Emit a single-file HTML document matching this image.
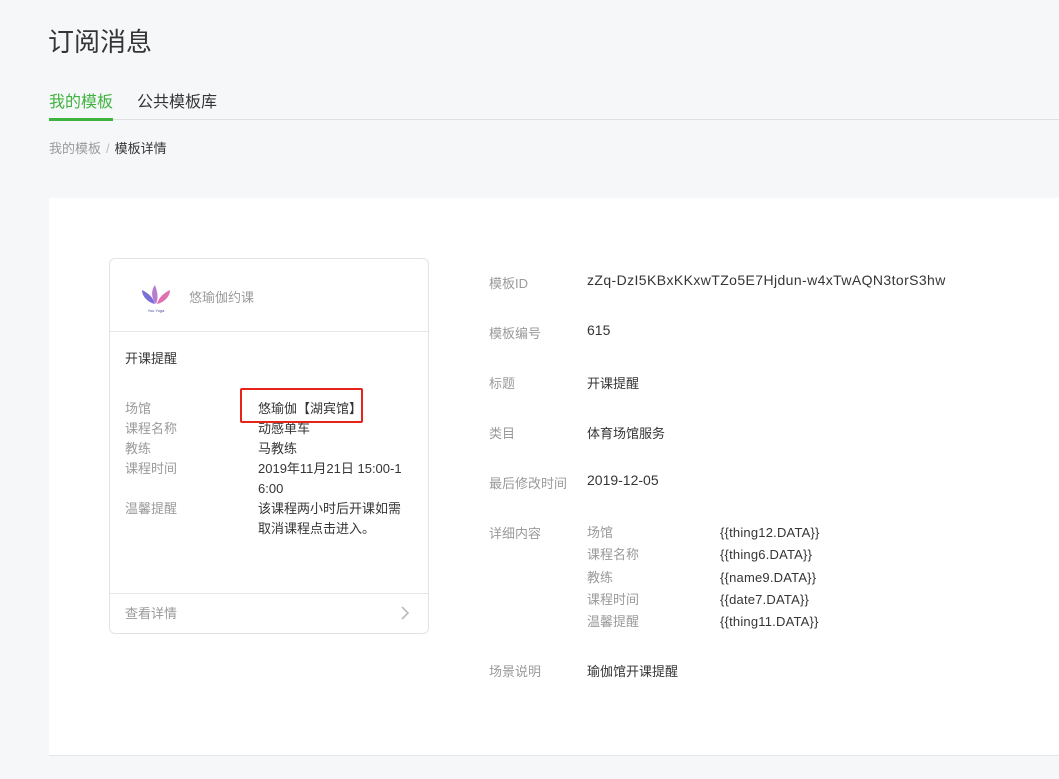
<!DOCTYPE html>
<html><head><meta charset="utf-8"><style>
*{margin:0;padding:0;box-sizing:border-box}
body{width:1059px;height:779px;background:#f6f7f9;font-family:"Liberation Sans","Noto Sans CJK SC",sans-serif;position:relative;overflow:hidden;color:#353535}
.a{position:absolute;white-space:nowrap}
.g{color:#9a9a9a}
.f14{font-size:14px}
.f13{font-size:13px}
</style></head><body>
<div class="a" style="left:48px;top:22px;font-size:26px;color:#353535">订阅消息</div>
<div class="a" style="left:49px;top:88px;font-size:16px;color:#3fb33f">我的模板</div>
<div class="a" style="left:137px;top:88px;font-size:16px;color:#353535">公共模板库</div>
<div class="a" style="left:49px;top:119px;width:1010px;height:1px;background:#e0e0e0"></div>
<div class="a" style="left:49px;top:118px;width:64px;height:3px;background:#3fb33f"></div>
<div class="a f13" style="left:49px;top:138px;color:#9a9a9a">我的模板<span style="color:#bbb;margin:0 5px">/</span><span style="color:#353535">模板详情</span></div>

<div class="a" style="left:49px;top:198px;width:1020px;height:558px;background:#fff;border-bottom:1px solid #e7e7e7"></div>

<div class="a" style="left:109px;top:258px;width:320px;height:376px;border:1px solid #e3e3e3;border-radius:6px;background:#fff"></div>
<div class="a" style="left:110px;top:331px;width:318px;height:1px;background:#e7e7e7"></div>
<div class="a" style="left:110px;top:593px;width:318px;height:1px;background:#e7e7e7"></div>
<svg class="a" style="left:139px;top:282px" width="34" height="32" viewBox="0 0 34 32">
<path d="M17 22 C12 16 12 8 16 3 C18 9 20 15 17 22Z" fill="#b87bd0"/>
<path d="M16 22 C8 20 3 14 3 8 C9 11 14 15 16 22Z" fill="#7a6fd8"/>
<path d="M18 22 C26 20 31 14 31 8 C25 11 20 15 18 22Z" fill="#e070b0"/>
<text x="17" y="30" font-size="4" text-anchor="middle" fill="#4a4aa0">You Yoga</text></svg>
<div class="a f13 g" style="left:189px;top:287px">悠瑜伽约课</div>
<div class="a f13" style="left:125px;top:348px">开课提醒</div>
<div class="a f13 g" style="left:125px;top:399px;line-height:20px">场馆<br>课程名称<br>教练<br>课程时间<br><br>温馨提醒</div>
<div class="a f13" style="left:258px;top:399px;line-height:20px">悠瑜伽【湖宾馆】<br>动感单车<br>马教练<br>2019年11月21日 15:00-1<br>6:00<br>该课程两小时后开课如需<br>取消课程点击进入。</div>
<div class="a" style="left:240px;top:388px;width:123px;height:35px;border:2px solid #e8231a;border-radius:2px"></div>
<div class="a f13 g" style="left:125px;top:603px">查看详情</div>
<svg class="a" style="left:400px;top:605px" width="10" height="16"><path d="M2 2 L8 8 L2 14" stroke="#bbb" stroke-width="1.6" fill="none"/></svg>

<div class="a f13 g" style="left:489px;top:273px">模板ID</div>
<div class="a f14" style="left:587px;top:272px;letter-spacing:0.4px">zZq-DzI5KBxKKxwTZo5E7Hjdun-w4xTwAQN3torS3hw</div>
<div class="a f13 g" style="left:489px;top:323px">模板编号</div>
<div class="a f14" style="left:587px;top:322px">615</div>
<div class="a f13 g" style="left:489px;top:373px">标题</div>
<div class="a f13" style="left:587px;top:373px">开课提醒</div>
<div class="a f13 g" style="left:489px;top:423px">类目</div>
<div class="a f13" style="left:587px;top:423px">体育场馆服务</div>
<div class="a f13 g" style="left:489px;top:473px">最后修改时间</div>
<div class="a f14" style="left:587px;top:472px">2019-12-05</div>
<div class="a f13 g" style="left:489px;top:523px">详细内容</div>
<div class="a f13 g" style="left:587px;top:522px;line-height:22.3px">场馆<br>课程名称<br>教练<br>课程时间<br>温馨提醒</div>
<div class="a f13" style="left:720px;top:522px;line-height:22.3px;letter-spacing:0.2px">{{thing12.DATA}}<br>{{thing6.DATA}}<br>{{name9.DATA}}<br>{{date7.DATA}}<br>{{thing11.DATA}}</div>
<div class="a f13 g" style="left:489px;top:661px">场景说明</div>
<div class="a f13" style="left:587px;top:661px">瑜伽馆开课提醒</div>
</body></html>
